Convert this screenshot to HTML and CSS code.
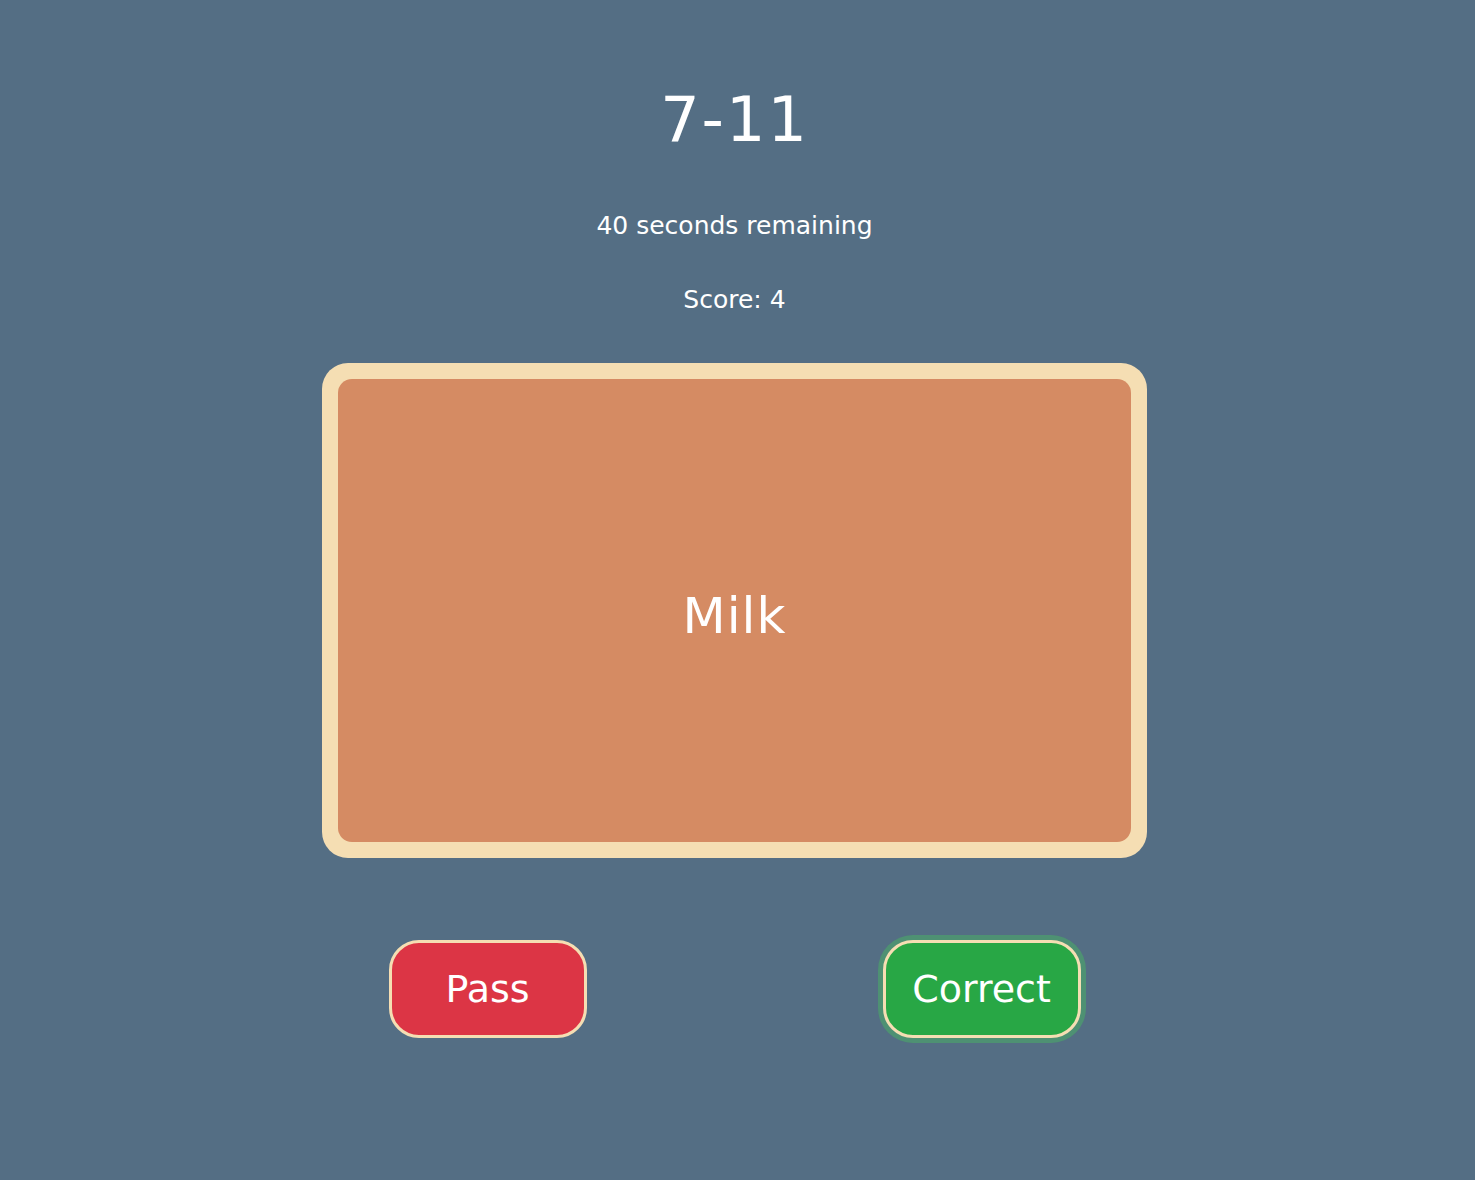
FILE: index.html
```html
<!DOCTYPE html>
<html>
<head>
<meta charset="utf-8">
<link rel="stylesheet" href="styles.css">
</head>
<body>
<main class="game">
  <h1 class="title">7-11</h1>
  <p class="timer">40 seconds remaining</p>
  <p class="score">Score: 4</p>
  <div class="card">
    <div class="card-inner">Milk</div>
  </div>
  <div class="actions">
    <button class="btn btn-pass">Pass</button>
    <button class="btn btn-correct">Correct</button>
  </div>
</main>
</body>
</html>
```

FILE: styles.css
```css
html, body {
  margin: 0;
  padding: 0;
}
body {
  background: #546e84;
  color: #ffffff;
  font-family: "DejaVu Sans", "Noto Sans", sans-serif;
  min-height: 1180px;
}
.game {
  display: flex;
  flex-direction: column;
  align-items: center;
  padding-top: 81px;
  padding-right: 6px;
}
.title {
  margin: 0;
  font-size: 62px;
  font-weight: 400;
  line-height: 77px;
  letter-spacing: 2px;
}
.timer {
  margin: 50px 0 0;
  font-size: 25px;
  line-height: 36px;
}
.score {
  margin: 38px 0 0;
  font-size: 25px;
  line-height: 36px;
}
.card {
  margin-top: 45px;
  width: 825px;
  height: 495px;
  box-sizing: border-box;
  background: #f5deb3;
  border-radius: 26px;
  padding: 16px;
}
.card-inner {
  height: 100%;
  background: #d58b63;
  border-radius: 14px;
  display: flex;
  align-items: center;
  justify-content: center;
  font-size: 50px;
  letter-spacing: 1px;
  padding-top: 10px;
  box-sizing: border-box;
}
.actions {
  margin-top: 82px;
  display: flex;
  gap: 296px;
}
.btn {
  width: 198px;
  height: 98px;
  box-sizing: border-box;
  border: 3px solid #f5deb3;
  border-radius: 30px;
  color: #ffffff;
  font-family: inherit;
  font-size: 38px;
  padding: 0;
}
.btn-pass {
  background: #dc3545;
}
.btn-correct {
  background: #28a745;
  box-shadow: 0 0 0 5px rgba(72, 180, 97, 0.5);
}
```
